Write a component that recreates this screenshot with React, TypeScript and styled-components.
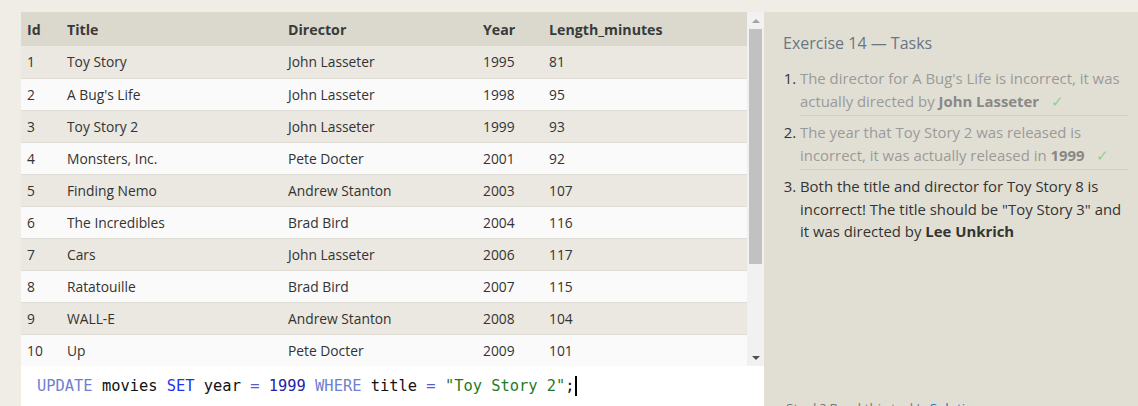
import React from "react"
import styled, { createGlobalStyle } from "styled-components"

const GlobalStyle = createGlobalStyle`
  html, body {
    margin: 0;
    padding: 0;
    background: #efede6;
    overflow: hidden;
  }
  * {
    box-sizing: border-box;
  }
`

const movies = [
  { id: 1, title: "Toy Story", director: "John Lasseter", year: 1995, length: 81 },
  { id: 2, title: "A Bug's Life", director: "John Lasseter", year: 1998, length: 95 },
  { id: 3, title: "Toy Story 2", director: "John Lasseter", year: 1999, length: 93 },
  { id: 4, title: "Monsters, Inc.", director: "Pete Docter", year: 2001, length: 92 },
  { id: 5, title: "Finding Nemo", director: "Andrew Stanton", year: 2003, length: 107 },
  { id: 6, title: "The Incredibles", director: "Brad Bird", year: 2004, length: 116 },
  { id: 7, title: "Cars", director: "John Lasseter", year: 2006, length: 117 },
  { id: 8, title: "Ratatouille", director: "Brad Bird", year: 2007, length: 115 },
  { id: 9, title: "WALL-E", director: "Andrew Stanton", year: 2008, length: 104 },
  { id: 10, title: "Up", director: "Pete Docter", year: 2009, length: 101 },
]

const columns = [
  { key: "id", label: "Id", width: 40 },
  { key: "title", label: "Title", width: 221 },
  { key: "director", label: "Director", width: 195 },
  { key: "year", label: "Year", width: 66 },
  { key: "length", label: "Length_minutes", width: 204 },
]

const App = () => {
  return (
    <>
      <GlobalStyle />
      <Page>
        <LeftCol>
          <TableFrame>
            <TableClip>
              <Table>
                <colgroup>
                  {columns.map(c => (
                    <col key={c.key} style={{ width: c.width }} />
                  ))}
                </colgroup>
                <thead>
                  <tr>
                    {columns.map(c => (
                      <Th key={c.key}>{c.label}</Th>
                    ))}
                  </tr>
                </thead>
                <tbody>
                  {movies.map((m: any, index: number) => (
                    <Row key={m.id} striped={index % 2 === 0}>
                      {columns.map(c => (
                        <Td key={c.key}>{m[c.key]}</Td>
                      ))}
                    </Row>
                  ))}
                </tbody>
              </Table>
            </TableClip>
            <ScrollBar>
              <ScrollButton>
                <Arrow up />
              </ScrollButton>
              <ScrollTrack>
                <ScrollThumb />
              </ScrollTrack>
              <ScrollButton>
                <Arrow />
              </ScrollButton>
            </ScrollBar>
          </TableFrame>
          <Editor>
            <Keyword>UPDATE</Keyword> movies <Keyword2>SET</Keyword2> year <Op>=</Op> <Num>1999</Num>{" "}
            <Keyword>WHERE</Keyword> title <Op>=</Op> <Str>"Toy Story 2"</Str>;<Caret />
          </Editor>
        </LeftCol>
        <Panel>
          <PanelTitle>Exercise 14 — Tasks</PanelTitle>
          <TaskList>
            <Task done>
              <TaskText done>
                The director for A Bug's Life is incorrect, it was actually directed by <b>John Lasseter</b>
                <Check>✓</Check>
              </TaskText>
            </Task>
            <Task done>
              <TaskText done>
                The year that Toy Story 2 was released is incorrect, it was actually released in <b>1999</b>
                <Check>✓</Check>
              </TaskText>
            </Task>
            <Task>
              <TaskText>
                Both the title and director for Toy Story 8 is incorrect! The title should be "Toy Story 3" and it
                was directed by <b>Lee Unkrich</b>
              </TaskText>
            </Task>
          </TaskList>
          <Footer>
            Stuck? Read this task's <Link>Solution</Link>
          </Footer>
        </Panel>
      </Page>
    </>
  )
}

export default App

const Page = styled.div`
  display: flex;
  height: 430px;
  padding: 12px 0 0 21px;
  font-family: "Open Sans", "Noto Sans", sans-serif;
`

const LeftCol = styled.div`
  width: 743px;
  display: flex;
  flex-direction: column;
`

const TableFrame = styled.div`
  display: flex;
  height: 354px;
`

const TableClip = styled.div`
  width: 726px;
  overflow: hidden;
`

const Table = styled.table`
  width: 726px;
  border-collapse: collapse;
  table-layout: fixed;
  font-size: 13.8px;
  color: #333;
`

const Th = styled.th`
  height: 34px;
  padding: 0 6px;
  text-align: left;
  font-weight: 700;
  font-size: 14.2px;
  background: #dbd9cd;
  color: #3a3a3a;
`

const Row = styled.tr<{ striped?: boolean }>`
  height: 32px;
  background: ${p => (p.striped ? "#eae8e0" : "#fafafa")};
  border-bottom: 1px solid #dedcd4;
`

const Td = styled.td`
  padding: 0 6px;
  white-space: nowrap;
`

const ScrollBar = styled.div`
  width: 17px;
  display: flex;
  flex-direction: column;
  background: #f1f1f1;
`

const ScrollButton = styled.div`
  height: 17px;
  display: flex;
  align-items: center;
  justify-content: center;
`

const Arrow = styled.div<{ up?: boolean }>`
  width: 0;
  height: 0;
  border-left: 4px solid transparent;
  border-right: 4px solid transparent;
  ${p => (p.up ? "border-bottom: 4px solid #a3a3a3;" : "border-top: 4px solid #505050;")}
`

const ScrollTrack = styled.div`
  flex: 1;
  padding: 0 2px;
`

const ScrollThumb = styled.div`
  height: 235px;
  background: #c1c1c1;
`

const Editor = styled.div`
  flex: 1;
  background: #ffffff;
  padding: 10px 16px;
  font-family: "DejaVu Sans Mono", "Liberation Mono", monospace;
  font-size: 15.4px;
  line-height: 20px;
  color: #111;
  white-space: pre;
`

const Keyword = styled.span`
  color: #7080d0;
`

const Keyword2 = styled.span`
  color: #2233ee;
`

const Op = styled.span`
  color: #5060c8;
`

const Num = styled.span`
  color: #2424a8;
`

const Str = styled.span`
  color: #1f7a1f;
`

const Caret = styled.span`
  display: inline-block;
  width: 0;
  height: 20px;
  border-left: 2px solid #000;
  vertical-align: top;
`

const Panel = styled.div`
  flex: 1;
  display: flex;
  flex-direction: column;
  background: #e1dfd3;
  padding: 20px 10px 12px 19px;
`

const PanelTitle = styled.div`
  font-size: 16px;
  line-height: 22px;
  color: #6a7586;
`

const TaskList = styled.ol`
  margin: 8px 0 0;
  padding-left: 17px;
  font-size: 14.9px;
  line-height: 22.5px;
  color: #333;
`

const Task = styled.li<{ done?: boolean }>`
  padding: 5px 0 3px;
  border-bottom: ${p => (p.done ? "1px solid #d2d0c4" : "none")};
`

const TaskText = styled.span<{ done?: boolean }>`
  color: ${p => (p.done ? "#9a9a9a" : "#333")};
  b {
    color: ${p => (p.done ? "#888" : "#333")};
  }
`

const Check = styled.span`
  color: #8fd18f;
  margin-left: 12px;
`

const Footer = styled.div`
  margin-top: auto;
  padding-left: 3px;
  font-size: 13.5px;
  line-height: 20px;
  color: #777;
`

const Link = styled.span`
  color: #1a6fd6;
`
